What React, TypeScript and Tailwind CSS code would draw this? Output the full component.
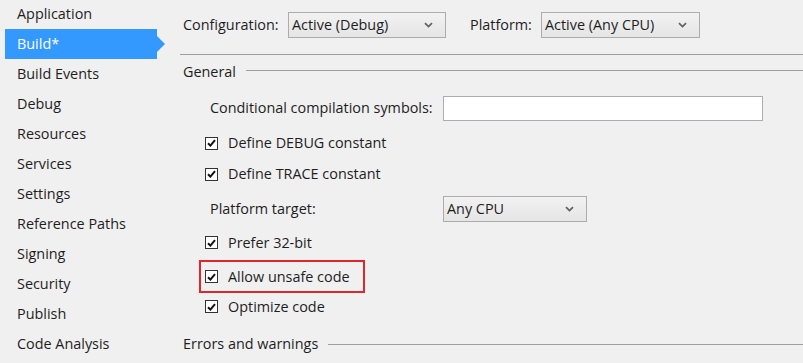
const navItems = [
  "Application",
  "Build*",
  "Build Events",
  "Debug",
  "Resources",
  "Services",
  "Settings",
  "Reference Paths",
  "Signing",
  "Security",
  "Publish",
  "Code Analysis",
];

function Chevron() {
  return (
    <svg width="9" height="6" viewBox="0 0 9 6" className="shrink-0">
      <path d="M1 1.2 L4.5 4.6 L8 1.2" fill="none" stroke="#606060" strokeWidth="1.7" />
    </svg>
  );
}

function Select({ value, width }: { value: string; width: string }) {
  return (
    <div
      className={`flex h-[26px] items-center justify-between border border-[#acacac] bg-gradient-to-b from-[#f2f2f2] to-[#e5e5e5] pl-[3px] pr-[12px] ${width}`}
    >
      <span>{value}</span>
      <Chevron />
    </div>
  );
}

function Check() {
  return (
    <span className="flex h-[13px] w-[13px] shrink-0 items-center justify-center border border-[#333] bg-white">
      <svg width="9" height="8" viewBox="0 0 9 8">
        <path d="M1 4.2 L3.4 6.6 L8 1.2" fill="none" stroke="#111" strokeWidth="2" />
      </svg>
    </span>
  );
}

function CheckRow({ label, h }: { label: string; h: string }) {
  return (
    <div className={`flex items-center gap-[10px] pl-[25px] ${h}`}>
      <Check />
      <span>{label}</span>
    </div>
  );
}

export default function App() {
  return (
    <div
      className="flex h-[363px] w-[803px] overflow-hidden bg-[#f0f0f0] text-[14.4px] text-[#1e1e1e]"
      style={{ fontFamily: '"Open Sans", "Noto Sans", sans-serif' }}
    >
      {/* left page list */}
      <nav className="-mt-px w-[180px] shrink-0 pl-[5px]">
        {navItems.map((item) =>
          item === "Build*" ? (
            <div key={item} className="flex h-[30px] items-center">
              <div className="flex h-[30px] w-[152px] items-center bg-[#3399ff] pl-[12px] text-white">
                {item}
              </div>
              <div className="h-0 w-0 border-y-[8px] border-l-[8px] border-y-transparent border-l-[#3399ff]" />
            </div>
          ) : (
            <div key={item} className="flex h-[30px] items-center pl-[12px]">
              {item}
            </div>
          )
        )}
      </nav>

      {/* build properties */}
      <main className="flex flex-1 flex-col">
        <div className="flex h-[50px] items-center pl-[3px]">
          <span className="w-[105px]">Configuration:</span>
          <Select value="Active (Debug)" width="w-[158px]" />
          <span className="ml-[24px] w-[71px]">Platform:</span>
          <Select value="Active (Any CPU)" width="w-[159px]" />
        </div>
        <div className="mt-[4px] h-px bg-[#a0a0a0]" />

        <div className="flex h-[33px] items-center gap-[10px] pl-[3px]">
          <span>General</span>
          <div className="mb-[2px] h-px flex-1 bg-[#a0a0a0]" />
        </div>

        <div className="flex h-[40px] items-center pl-[30px]">
          <span className="w-[233px]">Conditional compilation symbols:</span>
          <div className="h-[25px] w-[320px] border border-[#abadb3] bg-white" />
        </div>

        <CheckRow label="Define DEBUG constant" h="h-[30px]" />
        <CheckRow label="Define TRACE constant" h="h-[32px]" />

        <div className="flex h-[38px] items-center pl-[30px]">
          <span className="w-[233px]">Platform target:</span>
          <Select value="Any CPU" width="w-[144px]" />
        </div>

        <CheckRow label="Prefer 32-bit" h="h-[29px]" />

        <div className="mt-[3px] ml-[19px] flex h-[33px] w-[166px] items-center gap-[10px] border-2 border-[#e0262b] pl-[4px]">
          <Check />
          <span>Allow unsafe code</span>
        </div>

        <CheckRow label="Optimize code" h="h-[27px]" />

        <div className="mt-[10px] flex h-[28px] items-center gap-[10px] pl-[3px]">
          <span>Errors and warnings</span>
          <div className="h-px flex-1 bg-[#a0a0a0]" />
        </div>
      </main>
    </div>
  );
}
